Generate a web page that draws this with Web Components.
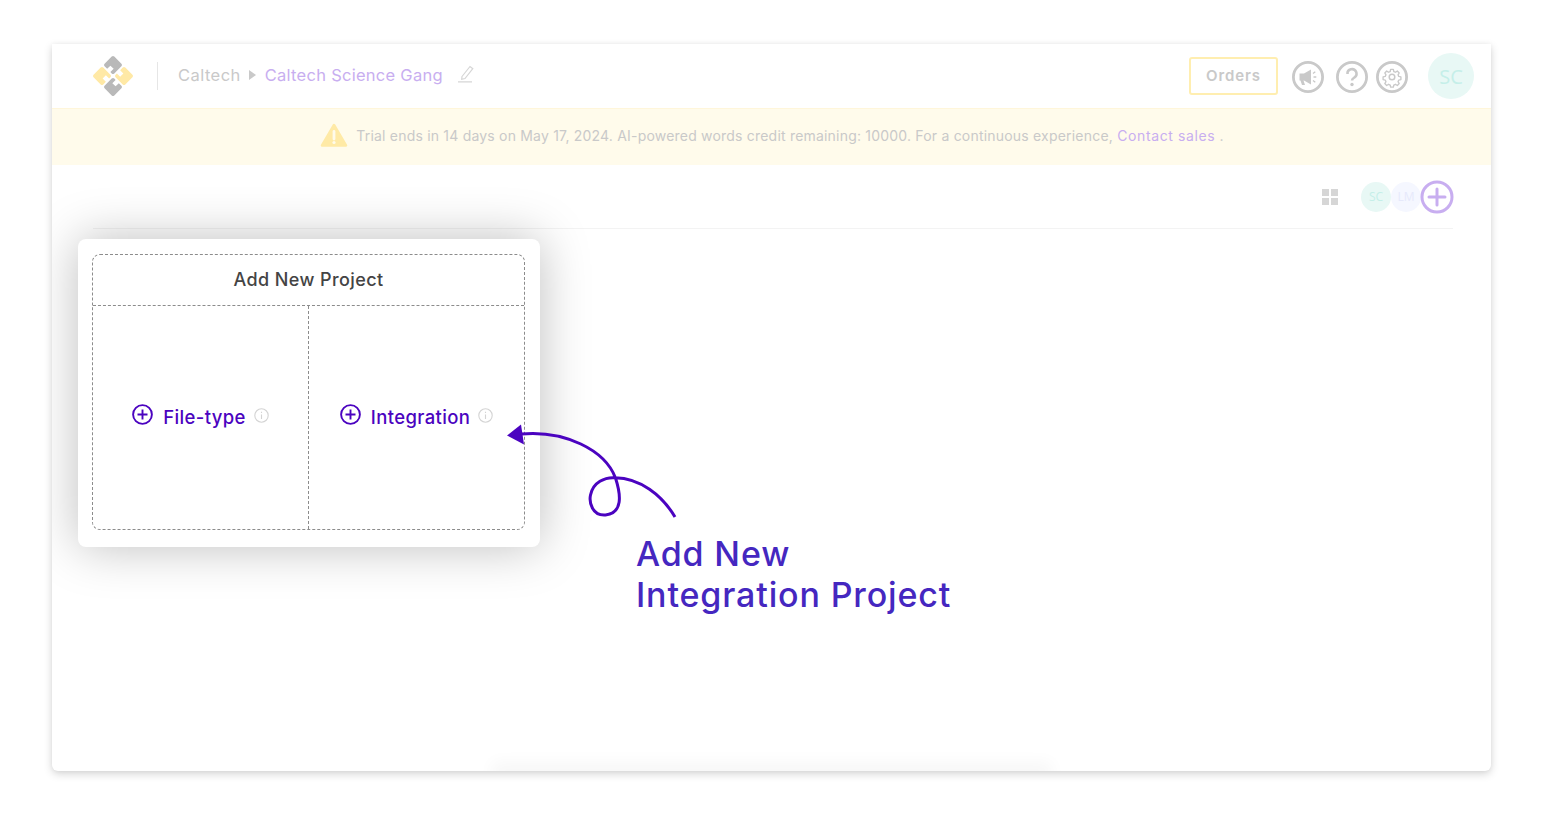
<!DOCTYPE html>
<html><head><meta charset="utf-8"><title>Add New Project</title>
<style>
html,body{margin:0;background:#fff;font-family:Inter,"Liberation Sans",sans-serif}
body{padding:44px 52px;width:1439px;height:727px;overflow:hidden}
</style></head><body>
<app-window>
  <top-bar slot="top"></top-bar>
  <trial-banner slot="top"></trial-banner>
  <tool-bar slot="top"></tool-bar>
  <project-popup slot="over"></project-popup>
  <callout-note slot="over"></callout-note>
</app-window>
<script>
function def(name,html){customElements.define(name,class extends HTMLElement{constructor(){super();this.attachShadow({mode:'open'}).innerHTML=html}})}
def('app-window',`<style>
:host{display:block;position:relative;width:1439px;height:727px;background:#fff;border-radius:0 0 6px 6px;box-shadow:0 3px 9px rgba(0,0,0,.17),0 0 5px rgba(0,0,0,.04);overflow:hidden}
.glow{position:absolute;left:450px;bottom:-2px;width:540px;height:1px;box-shadow:0 0 16px 10px rgba(0,0,0,.035)}
</style><slot name="top"></slot><div class="glow"></div><slot name="over"></slot>`);
def('top-bar',`<style>
:host{display:flex;align-items:center;height:64px;padding:0 17px 0 39px;background:#fff}
.logo{width:44px;height:44px;flex:none}
.sep{width:1px;height:28px;background:#e6e6e6;margin:0 20px 0 22px}
.crumb{display:flex;align-items:center;font-size:16.5px;color:#c9c9c9;letter-spacing:.45px;margin-top:-2px}
.crumb b{font-weight:400;color:#c8aef0;letter-spacing:.27px}
.tri{width:0;height:0;border-left:7px solid #c9c9c9;border-top:5.5px solid transparent;border-bottom:5.5px solid transparent;margin:0 9px 0 8px}
.pen{margin-left:14px;width:18px;height:18px;margin-top:-3px}
.right{margin-left:auto;display:flex;align-items:center}
.orders{box-sizing:border-box;width:89px;height:38px;border:2px solid #ffeeb0;border-radius:3px;display:flex;align-items:center;justify-content:center;font-size:15px;font-weight:600;letter-spacing:.9px;color:#c9c9c9;margin-right:14px;margin-top:-1px}
.ic{width:32px;height:32px;display:block;margin-top:2px}
.avatar{width:46px;height:46px;border-radius:50%;background:#e8f8f5;color:#c5efe9;font-size:20px;display:flex;align-items:center;justify-content:center;margin-left:20px;font-family:"Open Sans",sans-serif}
</style>
<svg class="logo" viewBox="-24 -24 48 48"><defs><path id="pc" d="M-14-16h11a2 2 0 0 1 2 2V-3a2 2 0 0 1-2 2H-5V-6H-10V-1H-14a2 2 0 0 1-2-2V-14a2 2 0 0 1 2-2z"/></defs>
<use href="#pc" fill="#b9b9b9" transform="rotate(45)"/>
<use href="#pc" fill="#ffe9a6" transform="rotate(135)"/>
<use href="#pc" fill="#b9b9b9" transform="rotate(225)"/>
<use href="#pc" fill="#ffe9a6" transform="rotate(315)"/>
</svg>
<div class="sep"></div>
<div class="crumb"><span>Caltech</span><i class="tri"></i><b>Caltech Science Gang</b>
<svg class="pen" viewBox="0 0 18 18" fill="none" stroke="#d6d6d6" stroke-width="1.2"><path d="M5 11.500 13 1.500l2.800 2.200L8 13.500 4.700 14.300z"/><path d="M1 16.800h14"/></svg></div>
<div class="right"><div class="orders">Orders</div>
<svg class="ic" viewBox="0 0 32 32"><circle cx="16" cy="16" r="14.600" fill="none" stroke="#c9c9c9" stroke-width="2.800"/><path fill="#c9c9c9" d="M7.500 12.500h4.500l7-4v15l-7-4h-.5l1.500 4.500h-3l-1.500-4.500H7.500z"/><path d="M21 12.500l2.300-1.700M21.500 16h2.800M21 19.500l2.300 1.700" stroke="#c9c9c9" stroke-width="1.300" fill="none"/></svg>
<svg class="ic" style="margin-left:12px" viewBox="0 0 32 32"><circle cx="16" cy="16" r="14.600" fill="none" stroke="#c9c9c9" stroke-width="2.800"/><path d="M11.500 13a4.500 4.500 0 1 1 7 3.400c-1.600 1-2.500 1.500-2.500 3.100" fill="none" stroke="#c9c9c9" stroke-width="2.600"/><circle cx="16" cy="23.500" r="1.700" fill="#c9c9c9"/></svg>
<svg class="ic" style="margin-left:8px" viewBox="0 0 32 32"><circle cx="16" cy="16" r="14.600" fill="none" stroke="#c9c9c9" stroke-width="2.800"/><g fill="none" stroke="#c9c9c9" stroke-width="1.500"><circle cx="16" cy="16" r="2.800"/><path d="M14.500 7.500h3l.5 2.400 1.800.8 2.100-1.300 2.100 2.100-1.300 2.100.8 1.800 2.400.5v3l-2.400.5-.8 1.800 1.300 2.100-2.100 2.100-2.100-1.300-1.800.8-.5 2.400h-3l-.5-2.400-1.800-.8-2.100 1.300-2.100-2.100 1.300-2.100-.8-1.800-2.400-.5v-3l2.400-.5.8-1.800-1.300-2.100 2.100-2.100 2.100 1.300 1.800-.8z" stroke-linejoin="round" transform="translate(16 16) scale(.9) translate(-16 -16)"/></g></svg>
<div class="avatar">SC</div></div>`);
def('trial-banner',`<style>
:host{display:flex;align-items:center;justify-content:center;height:57px;box-sizing:border-box;padding:0 0 2px 1px;background:#fffbeb;box-shadow:inset 0 1px 0 #fff6da;font-size:14px;color:#c9c9c9;white-space:pre}
svg{width:28px;height:26px;margin-right:8px;flex:none;margin-top:-1px}
span{letter-spacing:.2px}
a{color:#c8aef0;letter-spacing:.62px}
</style>
<svg viewBox="0 0 28 26"><path fill="#ffeaa6" stroke="#ffeaa6" stroke-width="2.500" stroke-linejoin="round" d="M14 3 26 23.500H2z"/><path d="M14 9.500v7.500" stroke="#fffbeb" stroke-width="2.800" stroke-linecap="round"/><circle cx="14" cy="20.500" r="1.600" fill="#fffbeb"/></svg>
<span>Trial ends in 14 days on May 17, 2024. AI-powered words credit remaining: 10000. For a continuous experience, </span><a>Contact sales</a><span> .</span>`);
def('tool-bar',`<style>
:host{display:flex;align-items:center;justify-content:flex-end;height:64px;margin:0 38px 0 41px;border-bottom:1px solid #f3f3f3;box-sizing:border-box}
.grid{display:grid;grid-template-columns:7px 7px;grid-auto-rows:7px;gap:2px;margin-right:23px}
.grid i{background:#d6d6d6}
.a{width:30px;height:30px;border-radius:50%;display:flex;align-items:center;justify-content:center;font-size:12px;font-family:"Open Sans",sans-serif}
.sc{background:#e8f8f5;color:#c5efe9}
.lm{background:#f5f7ff;color:#e6e9fb}
svg{width:34px;height:34px;margin-left:-1px;margin-right:-1px}
</style>
<div class="grid"><i></i><i></i><i></i><i></i></div>
<div class="a sc">SC</div><div class="a lm">LM</div>
<svg viewBox="0 0 34 34" fill="none" stroke="#c8aef0" stroke-width="3"><circle cx="17" cy="17" r="15"/><path d="M9 17h16M17 9v16" stroke-linecap="round"/></svg>`);
def('option-cell',`<style>
:host{display:flex;align-items:center;justify-content:center;padding-bottom:2px;color:#4b03c0;font-size:18.5px;font-weight:500;letter-spacing:.35px}
.plus{width:21px;height:21px;margin-right:10px;margin-top:-4px;flex:none}
.info{width:15px;height:15px;margin-left:8px;margin-top:-2px;flex:none}
</style>
<svg class="plus" viewBox="0 0 21 21" fill="none" stroke="#4b03c0" stroke-width="1.900"><circle cx="10.500" cy="10.500" r="9.400"/><path d="M10.500 5.500v10M5.500 10.500h10"/></svg>
<slot></slot>
<svg class="info" viewBox="0 0 15 15" fill="none" stroke="#d4d4d4" stroke-width="1.100"><circle cx="7.500" cy="7.500" r="6.700"/><path d="M7.500 6.500v4.500M7.500 3.800v1.300"/></svg>`);
def('project-popup',`<style>
:host{position:absolute;left:26px;top:195px;width:462px;height:308px;box-sizing:border-box;padding:15px 15px 17px 14px;background:#fff;border-radius:8px;box-shadow:0 0 50px rgba(0,0,0,.26)}
.box{height:100%;box-sizing:border-box;border:1px dashed #8c8c8c;border-radius:8px;display:grid;grid-template-rows:51px 1fr;grid-template-columns:215px 1fr}
h2{grid-column:1/3;margin:0;border-bottom:1px dashed #8c8c8c;display:flex;align-items:center;justify-content:center;font-size:18px;font-weight:500;color:#444;letter-spacing:.4px;padding-bottom:2px;box-sizing:border-box}
option-cell+option-cell{border-left:1px dashed #8c8c8c}
</style><div class="box"><h2>Add New Project</h2><option-cell>File-type</option-cell><option-cell>Integration</option-cell></div>`);
def('callout-note',`<style>
:host{position:absolute;left:0;top:0;width:1439px;height:727px;pointer-events:none;display:block}
svg{position:absolute;left:0;top:0}
p{position:absolute;left:584px;top:489px;margin:0;font-size:34px;line-height:41px;font-weight:500;letter-spacing:.85px;color:#4527c0}
</style>
<svg width="1439" height="727" viewBox="52 44 1439 727" fill="none"><path d="M521 434C565 430 605 450 615.500 478 621 495 623 513 605.500 515 592 516 589 502 590.500 495 593 482 605 477 615 477.700 640 478 662 495 675 517" stroke="#4b03c0" stroke-width="3"/><path fill="#4b03c0" d="M507 435.500 521 424.500 524 444.500z"/></svg>
<p>Add New<br>Integration Project</p>`);
</script>
</body></html>
